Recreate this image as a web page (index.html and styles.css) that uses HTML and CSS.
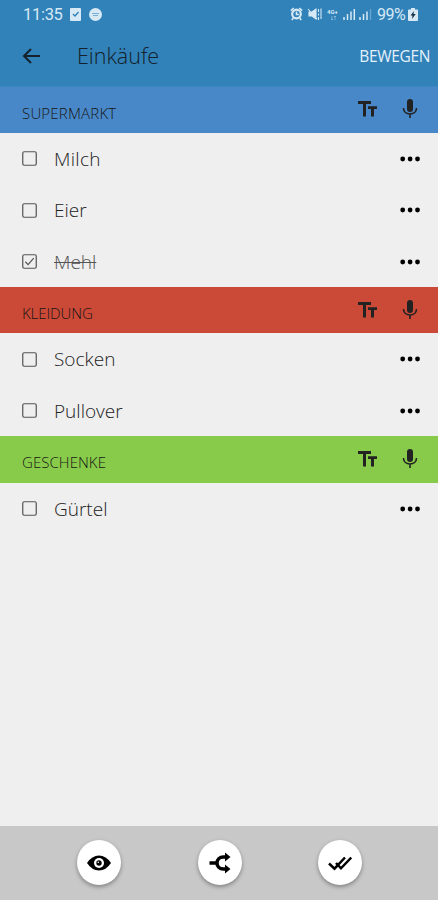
FILE: index.html
```html
<!DOCTYPE html>
<html lang="de">
<head>
<meta charset="utf-8">
<title>Einkäufe</title>
<link rel="stylesheet" href="styles.css">
</head>
<body>
<svg class="defs" aria-hidden="true">
  <symbol id="text-size" viewBox="0 0 19 16"><path d="M0 0h13v3H8v12.500H5V3H0zM10 5.300h9v2.700h-3v7.500h-3V8h-3z"/></symbol>
  <symbol id="mic" viewBox="0 0 16 20"><rect x="5" y="0" width="6" height="13" rx="3"/><path d="M1.500 9c0 3.800 3 6 6.500 6s6.500-2.200 6.500-6M8 15v4" fill="none" stroke="currentColor" stroke-width="1.600"/></symbol>
  <symbol id="more" viewBox="0 0 20 6"><circle cx="2.700" cy="3" r="2.400"/><circle cx="10.100" cy="3" r="2.400"/><circle cx="17.500" cy="3" r="2.400"/></symbol>
  <symbol id="box" viewBox="0 0 16 16"><rect x=".8" y=".8" width="14.400" height="14.400" rx="1.500" fill="none" stroke="currentColor" stroke-width="1.300"/></symbol>
</svg>
<div class="screen">
  <header class="top">
    <div class="status">
      <span class="time">11:35</span>
      <svg class="note" viewBox="0 0 11 13"><rect width="11" height="13" rx="1"/><path d="M3 6l2 2 3.500-4" fill="none" stroke="#3182b9" stroke-width="1.400"/></svg>
      <svg class="chat" viewBox="0 0 13 13"><circle cx="6.500" cy="6.500" r="6.500"/><path d="M3 5.500h7M4 7.500h5" stroke="#7aafd3" stroke-width="1.200"/></svg>
      <svg class="system" viewBox="0 0 82 14">
        <circle cx="6.500" cy="7" r="4.300" fill="none" stroke="currentColor" stroke-width="2.200"/><path d="M.8 3.700l3-2.700M9.200 1l3 2.700M6.500 4.500V7.500h2.300M3.300 11l-1.500 2M9.700 11l1.500 2" fill="none" stroke="currentColor" stroke-width="1.600"/>
        <path d="M19 5h3l4-3v10l-4-3h-3zM18 2l9 10M28.500 2v3M28.500 6.500v2M28.500 10v3M31 1.500V12" stroke="currentColor" stroke-width="1.100"/>
        <text x="37" y="6.500" class="network">4G+</text>
        <path d="M42 9v4m-1-1l1 1 1-1M45 13V9m-1 1l1-1 1 1" fill="none" stroke="currentColor" stroke-width=".6" opacity=".7"/>
        <path d="M54 10v3M57.500 7v6M61 4.500v8.500M64.300 2v11M70 10v3M73.500 7v6M77 4.500v8.500" stroke="currentColor" stroke-width="1.500"/><path d="M80.500 2v11" stroke="currentColor" stroke-width="1.300" opacity=".35"/>
      </svg>
      <span class="percent">99%</span>
      <svg class="battery" viewBox="0 0 10 13"><path d="M3 0h4v1.500h2q1 0 1 1V12q0 1-1 1H1q-1 0-1-1V2.500q0-1 1-1h2z"/><path d="M6 3L2.500 7.500h2L4 11l3.700-5H5.500z" fill="#163044"/></svg>
    </div>
    <div class="appbar">
      <svg class="back" viewBox="0 0 18 16"><path d="M18 8H2M9 1L2 8l7 7" fill="none" stroke="currentColor" stroke-width="2"/></svg>
      <h1>Einkäufe</h1>
      <span class="action">BEWEGEN</span>
    </div>
  </header>
  <main>
    <section>
      <div class="heading blue"><h2 class="wide">SUPERMARKT</h2><svg class="tt"><use href="#text-size"/></svg><svg class="mic"><use href="#mic"/></svg></div>
      <div class="item"><svg class="check"><use href="#box"/></svg><span class="milch">Milch</span><svg class="more"><use href="#more"/></svg></div>
      <div class="item"><svg class="check"><use href="#box"/></svg><span>Eier</span><svg class="more"><use href="#more"/></svg></div>
      <div class="item done"><svg class="check" viewBox="0 0 16 16"><use href="#box"/><path d="M3.500 8.300l3 3 6-7" fill="none" stroke="currentColor" stroke-width="1.300"/></svg><span>Mehl</span><svg class="more"><use href="#more"/></svg></div>
    </section>
    <section>
      <div class="heading red"><h2>KLEIDUNG</h2><svg class="tt"><use href="#text-size"/></svg><svg class="mic"><use href="#mic"/></svg></div>
      <div class="item"><svg class="check"><use href="#box"/></svg><span>Socken</span><svg class="more"><use href="#more"/></svg></div>
      <div class="item"><svg class="check"><use href="#box"/></svg><span>Pullover</span><svg class="more"><use href="#more"/></svg></div>
    </section>
    <section>
      <div class="heading green"><h2 class="medium">GESCHENKE</h2><svg class="tt"><use href="#text-size"/></svg><svg class="mic"><use href="#mic"/></svg></div>
      <div class="item"><svg class="check"><use href="#box"/></svg><span>Gürtel</span><svg class="more"><use href="#more"/></svg></div>
    </section>
  </main>
  <footer>
    <button aria-label="Anzeigen"><svg viewBox="0 0 24 24"><path d="M0 12Q5 4.500 12 4.500T24 12q-5 7.500-12 7.500T0 12z"/><circle cx="12" cy="12" r="5" fill="#fff"/><circle cx="12" cy="12" r="2.700"/><circle cx="11.300" cy="11.200" r=".8" fill="#fff"/></svg></button>
    <button aria-label="Teilen"><svg viewBox="0 0 24 24"><path d="M1.500 12H9M18 6h-2.500C11.500 6 9 8.500 9 12s2.500 6 6.500 6H18" fill="none" stroke="currentColor" stroke-width="3.500"/><path d="M17 1.500L22.500 6 17 10.500zM17 13.500l5.500 4.500-5.500 4.500z"/></svg></button>
    <button aria-label="Alle erledigt"><svg viewBox="0 0 24 24"><path d="M1 12.500l5.500 5.200L17 6.500M8 12l5 5.300L23.300 6.500" fill="none" stroke="currentColor" stroke-width="2.500"/></svg></button>
  </footer>
</div>
</body>
</html>
```

FILE: styles.css
```css
* { box-sizing: border-box; }
body { margin: 0; font-family: "Open Sans", "Noto Sans", sans-serif; color: #222; }
svg { display: block; flex: none; fill: currentColor; }
.defs { display: none; }
.screen { width: 438px; height: 900px; display: flex; flex-direction: column; background: #efefef; overflow: hidden; }
.top { height: 86.500px; background: #3182b9; border-bottom: 1px solid #3c86c2; }
.status { height: 28px; display: flex; align-items: center; padding: 0 20px 0 23px; color: #d7e9f5; font: 16.500px Roboto, sans-serif; }
.time { width: 47px; letter-spacing: -.3px; }
.note { width: 11px; height: 13px; }
.chat { width: 13px; height: 13px; margin-left: 8px; }
.system { width: 82px; height: 14px; margin-left: auto; }
.network { font: bold 6px Roboto, sans-serif; }
.percent { margin-left: 5px; width: 31px; font-size: 16px; letter-spacing: -.5px; }
.battery { width: 10px; height: 13px; }
.appbar { height: 56px; display: flex; align-items: center; padding: 0 8px 0 22px; }
.back { width: 18px; height: 16px; color: #15222b; }
h1 { margin: 0 0 0 37px; font-size: 21.500px; font-weight: 330; line-height: 30px; color: #14202a; }
.action { margin-left: auto; color: #e4f1fa; font-size: 15.500px; letter-spacing: -.35px; }
main { flex: 1; }
.heading { height: 46px; display: flex; align-items: center; padding: 0 20px 0 22px; }
.blue { background: #4988c8; }
.red { background: #ca4937; }
.green { height: 46.500px; background: #88cb4a; }
h2 { margin: 6px auto 0 0; font-size: 15px; font-weight: 350; line-height: 20px; letter-spacing: -.1px; color: #161616; }
.wide { letter-spacing: .2px; }
.medium { letter-spacing: .05px; }
.tt { width: 19px; height: 16px; margin-right: 25px; }
.mic { width: 16px; height: 20px; }
.heading svg { margin-top: -1px; }
.item { height: 51.500px; display: flex; align-items: center; padding: 1px 18px 0 22px; }
.item span { margin: 0 auto 0 17px; font-size: 19px; font-weight: 350; line-height: 26px; }
.item .milch { letter-spacing: .3px; }
.check { width: 15px; height: 15px; color: #555; }
.more { width: 20px; height: 6px; color: #000; }
.item.done span { color: #555; text-decoration: line-through; text-decoration-thickness: 1px; }
footer { height: 74px; display: flex; justify-content: center; gap: 76.500px; padding: 14px 0 0 1px; background: #c8c8c8; }
button { width: 44px; height: 45px; padding: 0; border: 0; border-radius: 50%; background: #fff; color: #000; display: flex; align-items: center; justify-content: center; box-shadow: 0 2px 4px rgba(0,0,0,.35); }
button svg { width: 24px; height: 24px; }
```
